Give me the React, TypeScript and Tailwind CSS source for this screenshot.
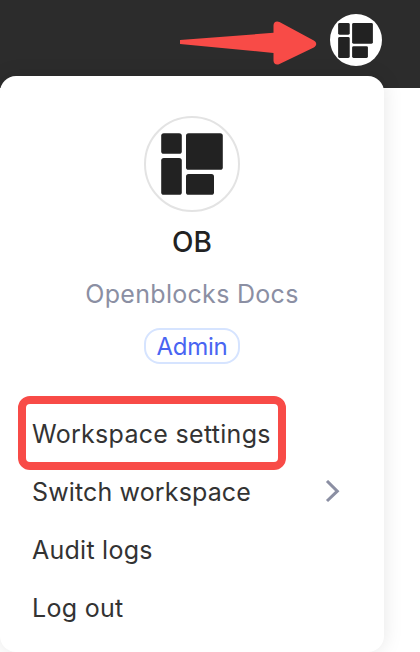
function BlocksLogo({ className }: { className: string }) {
  return (
    <svg viewBox="0 0 62 62" className={className} fill="#222222" aria-hidden="true">
      <rect x="0.2" y="0.2" width="20.6" height="20.6" rx="2.6" />
      <rect x="25" y="0.2" width="36.8" height="36.6" rx="2.6" />
      <rect x="0.2" y="25" width="20.6" height="36.8" rx="2.6" />
      <rect x="25" y="41" width="28" height="20.8" rx="2.6" />
    </svg>
  );
}

const items = [
  { label: "Workspace settings", tracking: "tracking-[0.3px]", highlighted: true },
  { label: "Switch workspace", tracking: "tracking-[0.14px]", submenu: true },
  { label: "Audit logs", tracking: "tracking-[0.25px]" },
  { label: "Log out", tracking: "tracking-[0.3px]" },
];

export default function App() {
  return (
    <div className="relative h-[652px] w-[420px] overflow-hidden bg-white font-['Inter',sans-serif]">
      <header className="flex h-[88px] items-start justify-end bg-[#2c2c2c] pr-[38px] pt-3.5">
        <svg className="mr-[13px] mt-1 h-12 w-[137px]" viewBox="0 0 137 48" fill="#f84b47" aria-hidden="true">
          <path d="M0 22 93.500 14.800V7.500C93.500 4 96.500 2.600 99.500 4.100L133.800 22.600C137 24.400 137 27.600 133.800 29.400L99.500 46C96.500 47.500 93.500 46 93.500 42.500V35L0 26Z" />
        </svg>
        <div className="flex size-[52px] items-center justify-center rounded-full bg-white pr-px">
          <BlocksLogo className="size-[35px]" />
        </div>
      </header>

      <div className="absolute left-0 top-[76px] flex h-[576px] w-96 flex-col rounded-2xl bg-white pt-10 shadow-[0_0_20px_rgba(0,0,0,0.1)]">
        <section className="flex flex-col items-center">
          <div className="flex size-24 items-center justify-center rounded-full border-2 border-[#e3e3e3]">
            <BlocksLogo className="size-[62px]" />
          </div>
          <h1 className="mt-3 text-[28px] font-medium leading-9 text-[#222222]">OB</h1>
          <p className="mt-4 text-[25px] leading-9 tracking-[0.3px] text-[#8b8fa3]">Openblocks Docs</p>
          <span className="mt-4 flex h-9 w-24 items-center justify-center rounded-2xl border-2 border-[#d6e4ff] pt-0.5 text-2xl tracking-[-0.3px] text-[#4965f2]">
            Admin
          </span>
        </section>

        <nav className="mt-[41px] flex flex-col">
          {items.map((item) => (
            <button
              key={item.label}
              className="relative flex h-[58px] items-center justify-between pl-8 pr-[43px] text-left text-[25px] text-[#333333]"
            >
              <span className={`pt-0.5 ${item.tracking}`}>{item.label}</span>
              {item.submenu && (
                <svg className="h-6 w-4" viewBox="0 0 16 24" fill="none" stroke="#8b8fa3" strokeWidth="3" aria-hidden="true">
                  <path d="M2 1 12.300 11.200 2 21" />
                </svg>
              )}
              {item.highlighted && (
                <span className="absolute -top-[9px] left-[18px] h-[74px] w-[268px] rounded-xl border-8 border-[#f84b47]" />
              )}
            </button>
          ))}
        </nav>
      </div>
    </div>
  );
}
